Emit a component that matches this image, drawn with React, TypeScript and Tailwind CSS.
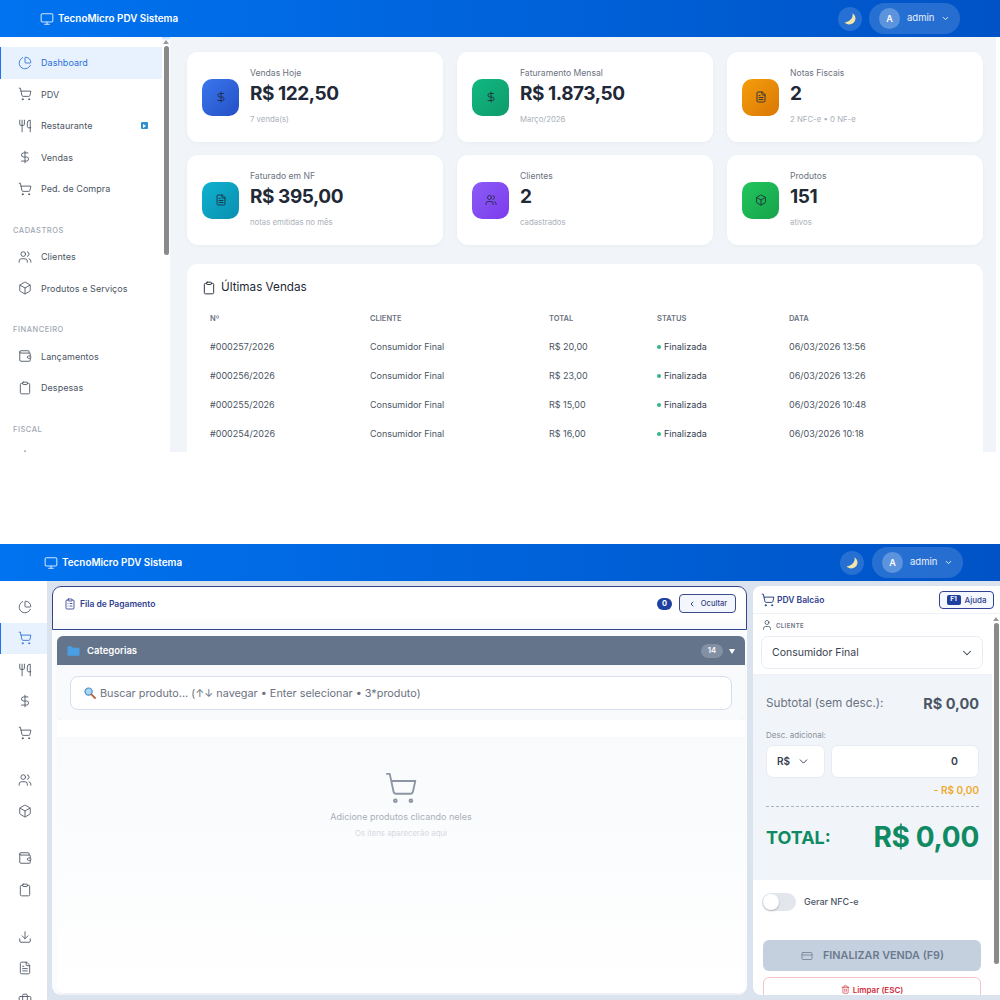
import React from "react";
import {
  ChartPie, ShoppingCart, Utensils, DollarSign, Users, Box, Wallet, Clipboard, Download, FileText, Briefcase,
  Monitor, ChevronDown, ChevronLeft, Trash2, CreditCard, User, ClipboardList, type LucideIcon,
} from "lucide-react";

const font = "font-['Inter','Liberation_Sans',sans-serif]";

function Moon() {
  return (
    <svg width="14" height="14" viewBox="0 0 14 14">
      <path d="M9.5 1.2C10.6 5.2 7.4 9.6 1.6 10.6C4.4 13.6 11.2 13 12.4 7.6C12.9 5.2 11.6 2.6 9.5 1.2Z" fill="#f3e6a8" />
    </svg>
  );
}

function Header({ pad, gap }: { pad: string; gap: string }) {
  return (
    <header className={`h-[37px] shrink-0 flex items-center bg-gradient-to-r from-[#0173f0] to-[#0053c6] shadow-[0_1px_4px_rgba(13,110,253,0.35)] ${pad}`}>
      <Monitor size={14} strokeWidth={1.8} className="text-[#cfe6ff]" />
      <span className="ml-[4px] text-white text-[9.9px] font-semibold">TecnoMicro PDV Sistema</span>
      <div className="ml-auto flex items-center">
        <div className="w-[24px] h-[24px] rounded-full bg-white/15 flex items-center justify-center"><Moon /></div>
        <div className={`${gap} w-[91px] h-[31px] rounded-full bg-white/15 flex items-center pl-[10px]`}>
          <div className="w-[21px] h-[21px] rounded-full bg-white/25 flex items-center justify-center text-white text-[9px] font-semibold">A</div>
          <span className="ml-[7px] text-white/90 text-[9.5px]">admin</span>
          <ChevronDown size={9} strokeWidth={2.5} className="ml-[7px] text-white/90" />
        </div>
      </div>
    </header>
  );
}

function NavItem({ icon: Icon, label, active, extra }: { icon: LucideIcon; label?: string; active?: boolean; extra?: boolean }) {
  return (
    <div className={`h-[31.5px] flex items-center pl-[17px] border-l ${active ? "border-[#1d74e8] bg-[#e7f2fe] text-[#2b6fd6]" : "border-transparent text-[#4b5563]"}`}>
      <Icon size={14} strokeWidth={1.5} className="shrink-0" />
      {label && <span className="ml-[9px] text-[9px] tracking-[0.05px]">{label}</span>}
      {extra && (
        <span className="ml-auto mr-[14px] w-[7px] h-[7px] bg-[#2f8fd0] rounded-[1px] flex items-center justify-center">
          <span className="w-0 h-0 border-y-[2px] border-y-transparent border-l-[3px] border-l-white" />
        </span>
      )}
    </div>
  );
}

function SectionLabel({ text }: { text: string }) {
  return <div className="h-[36.5px] pl-[13px] pt-[20px] text-[7.5px] leading-[11px] tracking-[0.5px] text-[#a1a8b3] font-medium">{text}</div>;
}

function ScrollBar({ thumb, w = "w-[8px]" }: { thumb: string; w?: string }) {
  return (
    <div className={`${w} shrink-0 flex flex-col items-center`}>
      <span className="mt-[3px] w-0 h-0 border-x-[3px] border-x-transparent border-b-[4px] border-b-[#9a9a9a]" />
      <div className={`mt-[2px] w-[5px] rounded-full bg-[#8a8a8a] ${thumb}`} />
    </div>
  );
}

const cards = [
  { label: "Vendas Hoje", value: "R$ 122,50", sub: "7 venda(s)", grad: "from-[#3b76ee] to-[#2450c4]", icon: DollarSign },
  { label: "Faturamento Mensal", value: "R$ 1.873,50", sub: "Março/2026", grad: "from-[#10b981] to-[#0f9a6c]", icon: DollarSign },
  { label: "Notas Fiscais", value: "2", sub: "2 NFC-e • 0 NF-e", grad: "from-[#f59e0b] to-[#d97706]", icon: FileText },
  { label: "Faturado em NF", value: "R$ 395,00", sub: "notas emitidas no mês", grad: "from-[#0fb2cf] to-[#0b8fb0]", icon: FileText },
  { label: "Clientes", value: "2", sub: "cadastrados", grad: "from-[#8b5cf6] to-[#7c3aed]", icon: Users },
  { label: "Produtos", value: "151", sub: "ativos", grad: "from-[#22c55e] to-[#16a34a]", icon: Box },
];

const sales = [
  ["#000257/2026", "R$ 20,00", "06/03/2026 13:56"],
  ["#000256/2026", "R$ 23,00", "06/03/2026 13:26"],
  ["#000255/2026", "R$ 15,00", "06/03/2026 10:48"],
  ["#000254/2026", "R$ 16,00", "06/03/2026 10:18"],
];

const cols = "grid grid-cols-[160px_179px_108px_132px_1fr]";

function Dashboard() {
  return (
    <section className="h-[452px] overflow-hidden flex flex-col">
      <Header pad="pl-[40px] pr-[40px]" gap="ml-[7px]" />
      <div className="flex-1 flex min-h-0">
        <aside className="w-[162px] shrink-0 bg-white pt-[10px]">
          <NavItem icon={ChartPie} label="Dashboard" active />
          <NavItem icon={ShoppingCart} label="PDV" />
          <NavItem icon={Utensils} label="Restaurante" extra />
          <NavItem icon={DollarSign} label="Vendas" />
          <NavItem icon={ShoppingCart} label="Ped. de Compra" />
          <SectionLabel text="CADASTROS" />
          <NavItem icon={Users} label="Clientes" />
          <NavItem icon={Box} label="Produtos e Serviços" />
          <SectionLabel text="FINANCEIRO" />
          <NavItem icon={Wallet} label="Lançamentos" />
          <NavItem icon={Clipboard} label="Despesas" />
          <SectionLabel text="FISCAL" />
          <NavItem icon={Download} label="Notas de Entrada" />
        </aside>
        <ScrollBar thumb="h-[209px]" />
        <main className="flex-1 bg-[#f1f5f9] pt-[15px] pl-[17px] pr-[13px] min-w-0 border-r-[4px] border-r-white">
          <div className="grid grid-cols-3 gap-x-[14px] gap-y-[13px]">
            {cards.map((c) => {
              const I = c.icon;
              return (
                <div key={c.label} className="h-[90px] bg-white rounded-[11px] shadow-[0_1px_4px_rgba(15,23,42,0.04)] flex items-center pl-[15px]">
                  <div className={`w-[37px] h-[37px] rounded-[10px] bg-gradient-to-br ${c.grad} flex items-center justify-center`}>
                    <I size={12} strokeWidth={1.7} className="text-[#1e293b]" />
                  </div>
                  <div className="ml-[11px] mt-[-2px]">
                    <div className="text-[8.6px] leading-[11px] text-[#6b7280]">{c.label}</div>
                    <div className="text-[19px] leading-[24px] font-bold tracking-[-0.45px] text-[#1f2937] mt-[3px]">{c.value}</div>
                    <div className="text-[7.8px] leading-[10px] text-[#aab0ba] mt-[8px]">{c.sub}</div>
                  </div>
                </div>
              );
            })}
          </div>
          <div className="mt-[19px] bg-white rounded-t-[11px] h-[200px] pl-[15px] pt-[16px]">
            <div className="flex items-center h-[16px]">
              <Clipboard size={14} strokeWidth={1.6} className="text-[#1f2937]" />
              <span className="ml-[5px] text-[11.7px] text-[#1f2937]">Últimas Vendas</span>
            </div>
            <div className={`${cols} pl-[8px] mt-[18px] text-[7.5px] leading-[10px] font-semibold text-[#6b7280]`}>
              <span>Nº</span><span>CLIENTE</span><span>TOTAL</span><span>STATUS</span><span>DATA</span>
            </div>
            <div className="mt-[8px]">
              {sales.map((s) => (
                <div key={s[0]} className={`${cols} pl-[8px] h-[29.2px] items-center text-[9px] text-[#4b5563]`}>
                  <span>{s[0]}</span>
                  <span>Consumidor Final</span>
                  <span>{s[1]}</span>
                  <span className="flex items-center text-[#374151]"><span className="w-[4px] h-[4px] rounded-full bg-[#34b58a] mr-[3px]" />Finalizada</span>
                  <span>{s[2]}</span>
                </div>
              ))}
            </div>
          </div>
        </main>
      </div>
    </section>
  );
}

function Pdv() {
  return (
    <section className="h-[456px] overflow-hidden flex flex-col">
      <Header pad="pl-[44px] pr-[37px]" gap="ml-[8px]" />
      <div className="flex-1 flex min-h-0">
        <aside className="w-[47px] shrink-0 bg-white pt-[10px]">
          <NavItem icon={ChartPie} />
          <NavItem icon={ShoppingCart} active />
          <NavItem icon={Utensils} />
          <NavItem icon={DollarSign} />
          <NavItem icon={ShoppingCart} />
          <div className="h-[15.5px]" />
          <NavItem icon={Users} />
          <NavItem icon={Box} />
          <div className="h-[15.5px]" />
          <NavItem icon={Wallet} />
          <NavItem icon={Clipboard} />
          <div className="h-[15.5px]" />
          <NavItem icon={Download} />
          <NavItem icon={FileText} />
          <NavItem icon={Briefcase} />
        </aside>
        <main className="flex-1 min-w-0 bg-[#dbe3ef] pl-[5px] pt-[5px] pb-[5px] flex gap-[6px]">
          <div className="w-[695px] shrink-0 bg-[#fbfcfe] rounded-[9px] flex flex-col min-h-0">
            <div className="h-[44px] shrink-0 rounded-t-[9px] border border-[#35458c] bg-gradient-to-b from-white from-70% to-[#f7f8fb] flex items-start pt-[7px] pl-[11px] pr-[10px]">
              <ClipboardList size={12} strokeWidth={1.7} className="text-[#2f4190] mt-[4px]" />
              <span className="ml-[4px] mt-[3px] text-[8.5px] leading-[14px] font-semibold text-[#2f4190]">Fila de Pagamento</span>
              <span className="ml-auto mt-[4px] w-[15px] h-[12px] rounded-full bg-[#1e40a0] text-white text-[7.5px] font-bold flex items-center justify-center">0</span>
              <div className="ml-[7px] w-[57px] h-[19px] rounded-[4px] border border-[#3a4a8c] bg-[#f3f6fd] flex items-center justify-center text-[#33437f] text-[7.5px] font-medium">
                <ChevronLeft size={8} strokeWidth={3} className="mr-[5px]" />Ocultar
              </div>
            </div>
            <div className="mt-[6px] ml-[5px] mr-[2px] flex-1 flex flex-col min-h-0">
              <div className="h-[29px] shrink-0 rounded-t-[6px] bg-[#64748b] flex items-center pl-[10px] pr-[10px] pt-[1px]">
                <svg width="13" height="10" viewBox="0 0 13 10">
                  <path d="M0.5 1.2C0.5 0.7 0.9 0.3 1.4 0.3H4.4L5.8 1.8H11.6C12.1 1.8 12.5 2.2 12.5 2.7V8.8C12.5 9.3 12.1 9.7 11.6 9.7H1.4C0.9 9.7 0.5 9.3 0.5 8.8Z" fill="#4a9fe4" />
                </svg>
                <span className="ml-[7px] text-white text-[9.5px] font-semibold">Categorias</span>
                <span className="ml-auto w-[22px] h-[14px] rounded-full bg-white/20 text-white/90 text-[7.5px] font-bold flex items-center justify-center">14</span>
                <span className="ml-[6px] w-0 h-0 border-x-[3px] border-x-transparent border-t-[5px] border-t-white" />
              </div>
              <div className="h-[55px] shrink-0 bg-[#f8fafc] rounded-b-[6px] pt-[11px] pl-[13px] pr-[13px] shadow-[0_1px_2px_rgba(15,23,42,0.05)]">
                <div className="h-[34px] rounded-[8px] bg-white border border-[#d8def0] flex items-center pl-[13px] text-[10.85px] text-[#6b7280]">
                  <svg width="12" height="12" viewBox="0 0 12 12">
                    <circle cx="4.6" cy="4.6" r="3.6" fill="#a9d6f5" stroke="#4d8fc4" strokeWidth="1.2" />
                    <path d="M7.4 7.4L11 11" stroke="#b5653a" strokeWidth="1.8" strokeLinecap="round" />
                  </svg>
                  <span className="ml-[4px]">Buscar produto... (↑↓ navegar • Enter selecionar • 3*produto)</span>
                </div>
              </div>
              <div className="h-[17px] shrink-0 bg-white" />
              <div className="flex-1 bg-gradient-to-b from-[#f8fafc] to-white flex flex-col items-center pt-[34px] rounded-b-[6px] border-b-2 border-b-[#eef2f7]">
                <ShoppingCart size={34} strokeWidth={1.3} className="text-[#8c95a3] -ml-[1px]" />
                <div className="mt-[6px] text-[9px] leading-[12px] text-[#a9afba]">Adicione produtos clicando neles</div>
                <div className="mt-[5px] text-[7.8px] leading-[10px] text-[#d6d9df]">Os itens aparecerão aqui</div>
              </div>
            </div>
          </div>
          <div className="flex-1 min-w-0 bg-white rounded-l-[8px] flex flex-col min-h-0 overflow-hidden">
            <div className="h-[28px] shrink-0 border-b border-b-[#eef1f5] flex items-center pl-[8px] pr-[6px]">
              <ShoppingCart size={14} strokeWidth={1.6} className="text-[#1e3a7c]" />
              <span className="ml-[2px] mt-[1px] text-[8.5px] font-semibold text-[#2f4190]">PDV Balcão</span>
              <div className="ml-auto w-[55px] h-[18px] rounded-[4px] border border-[#2f4190] bg-[#f5f8fe] flex items-center justify-center text-[#2f4190] text-[8px] font-medium">
                <span className="w-[14px] h-[10px] rounded-[2px] bg-[#1e40a0] text-white text-[6.5px] font-bold flex items-center justify-center mr-[4px]">F1</span>Ajuda
              </div>
            </div>
            <div className="flex-1 flex min-h-0">
              <div className="flex-1 min-w-0 flex flex-col">
                <div className="h-[61px] shrink-0 pl-[8px] pr-[9px] border-b border-b-[#eef1f5]">
                  <div className="h-[22px] flex items-center">
                    <User size={12} strokeWidth={1.6} className="text-[#4b5563]" />
                    <span className="ml-[3px] text-[6px] font-semibold tracking-[0.4px] text-[#6b7280]">CLIENTE</span>
                  </div>
                  <div className="h-[33px] rounded-[7px] border border-[#e8ecf2] bg-white flex items-center pl-[10px] pr-[8px] text-[10.5px] text-[#374151]">
                    Consumidor Final
                    <ChevronDown size={14} strokeWidth={1.8} className="ml-auto text-[#374151]" />
                  </div>
                </div>
                <div className="h-[205px] shrink-0 bg-[#f1f5f9] pl-[13px] pr-[13px]">
                  <div className="flex items-center justify-between h-[18px] mt-[20px]">
                    <span className="text-[11.7px] text-[#6b7280]">Subtotal (sem desc.):</span>
                    <span className="text-[14.5px] font-bold text-[#4b5563]">R$ 0,00</span>
                  </div>
                  <div className="mt-[17px] text-[8px] leading-[11px] text-[#8a919c]">Desc. adicional:</div>
                  <div className="mt-[4px] flex gap-[6px]">
                    <div className="w-[59px] h-[33px] rounded-[7px] bg-white border border-[#e8ecf2] flex items-center pl-[10px] text-[10px] font-semibold text-[#374151]">
                      R$<ChevronDown size={13} strokeWidth={1.8} className="ml-[7px]" />
                    </div>
                    <div className="flex-1 h-[33px] rounded-[7px] bg-white border border-[#e8ecf2] flex items-center justify-end pr-[20px] text-[10.5px] font-semibold text-[#374151]">0</div>
                  </div>
                  <div className="mt-[6px] text-right text-[10px] leading-[13px] font-semibold text-[#f0a92e]">- R$ 0,00</div>
                  <div className="mt-[9px] border-t border-dashed border-t-[#aab2be]" />
                  <div className="flex items-center justify-between h-[30px] mt-[15px]">
                    <span className="text-[18px] font-bold text-[#0f8a63]">TOTAL:</span>
                    <span className="text-[28px] tracking-[-0.3px] font-bold text-[#0f8a63]">R$ 0,00</span>
                  </div>
                </div>
                <div className="h-[60px] shrink-0 flex items-start pl-[9px] pt-[13px]">
                  <div className="w-[34px] h-[18px] rounded-full bg-[#e3e7ed] flex items-center">
                    <span className="w-[16px] h-[16px] rounded-full bg-white shadow-[0_1px_2px_rgba(0,0,0,0.25)] ml-[1px]" />
                  </div>
                  <span className="ml-[8px] mt-[3px] text-[9px] leading-[12px] font-medium text-[#4b5563]">Gerar NFC-e</span>
                </div>
                <div className="ml-[10px] w-[218px]">
                  <div className="h-[31px] rounded-[6px] bg-[#c5d0de] flex items-center justify-center pl-[1px] pt-[1px] text-[10.8px] font-semibold text-[#6b7a8f]">
                    <CreditCard size={12} strokeWidth={1.5} className="mr-[10px]" />FINALIZAR VENDA (F9)
                  </div>
                  <div className="mt-[6px] h-[40px] rounded-[6px] border border-[#f4c4c8] bg-white flex items-start justify-center pt-[6px] text-[8px] font-semibold text-[#cf2e3e]">
                    <Trash2 size={9} strokeWidth={1.8} className="mr-[3px] mt-[1px]" />Limpar (ESC)
                  </div>
                </div>
              </div>
              <ScrollBar thumb="h-[341px]" w="w-[8px]" />
            </div>
          </div>
        </main>
      </div>
    </section>
  );
}

export default function App() {
  return (
    <div className={`w-[1000px] h-[1000px] overflow-hidden bg-white ${font}`}>
      <Dashboard />
      <div className="h-[92px]" />
      <Pdv />
    </div>
  );
}
